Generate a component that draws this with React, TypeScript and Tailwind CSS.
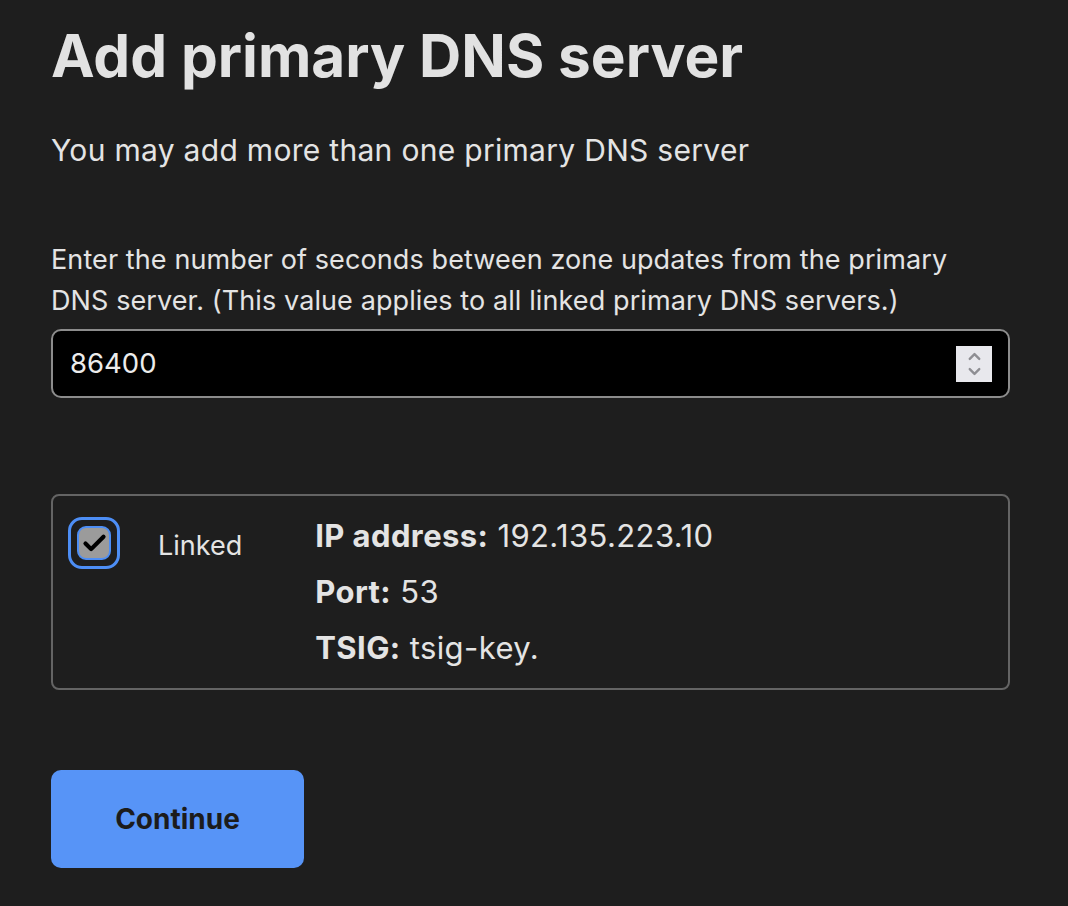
import { Check, ChevronDown, ChevronUp } from 'lucide-react';

export default function App() {
  const details = [
    { label: 'IP address:', value: '192.135.223.10' },
    { label: 'Port:', value: '53' },
    { label: 'TSIG:', value: 'tsig-key.' },
  ];

  return (
    <div
      className="min-h-[906px] w-[1068px] bg-[#1e1e1e] pl-[51px] pr-[58px] text-[#e4e4e4]"
      style={{ fontFamily: 'Inter, "Noto Sans", sans-serif' }}
    >
      <h1 className="pt-[18px] text-[58.5px] font-bold leading-[76px] text-[#e2e2e2]">Add primary DNS server</h1>
      <p className="mt-[38px] text-[30px] leading-[36px] tracking-[0.3px]">
        You may add more than one primary DNS server
      </p>

      <p className="mt-[71px] max-w-[940px] text-[27px] leading-[41px] tracking-[0.1px]">
        Enter the number of seconds between zone updates from the primary DNS server. (This value applies to all
        linked primary DNS servers.)
      </p>
      <div className="mt-[8px] flex h-[69px] items-center rounded-[10px] border-2 border-[#8c8c8c] bg-black pl-[17px] pr-[16px]">
        <span className="flex-1 text-[27.5px] text-[#ececec]">86400</span>
        <div className="flex h-[36px] w-[36px] flex-col items-center justify-center bg-[#e8e8ed] text-[#8e8e93]">
          <ChevronUp className="-mb-[2px] h-[19px] w-[19px]" strokeWidth={3} />
          <ChevronDown className="-mt-[2px] h-[19px] w-[19px]" strokeWidth={3} />
        </div>
      </div>

      <div className="mt-[96px] flex rounded-[8px] border-2 border-[#646464] pb-[12px] pl-[15px] pt-[12px]">
        <div className="mt-[9px] flex h-[52px] w-[52px] items-center justify-center rounded-[14px] border-[3px] border-[#4d8ef5]">
          <div className="flex h-[34px] w-[34px] items-center justify-center rounded-[9px] border-2 border-[#4d8ef5] bg-[#9b9b9b]">
            <Check className="h-[27px] w-[27px] text-black" strokeWidth={3.75} />
          </div>
        </div>
        <span className="ml-[38px] mt-[22px] text-[27px] leading-[32px]">Linked</span>
        <div className="ml-[73px] flex flex-col">
          {details.map((d) => (
            <p key={d.label} className="text-[31px] leading-[56px] tracking-[0.4px]">
              <span className="font-bold">{d.label}</span> {d.value}
            </p>
          ))}
        </div>
      </div>

      <button className="mt-[80px] flex h-[98px] w-[253px] items-center justify-center rounded-[10px] bg-[#5794f7] text-[28px] font-bold text-[#1c1c1c]">
        Continue
      </button>
    </div>
  );
}
